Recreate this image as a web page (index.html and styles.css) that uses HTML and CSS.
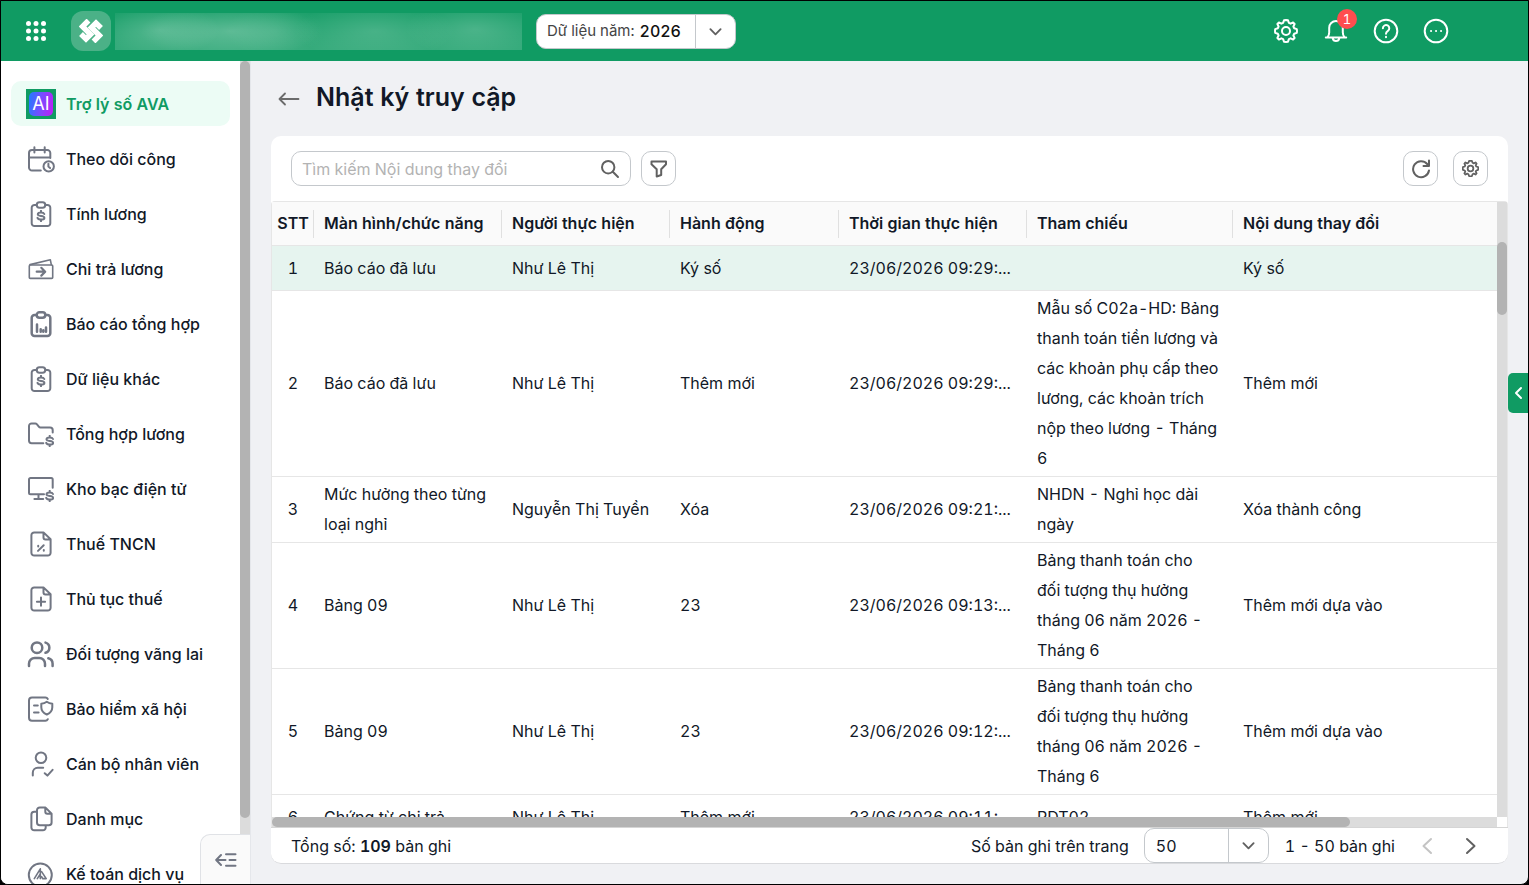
FILE: index.html
```html
<!DOCTYPE html>
<html lang="vi">
<head>
    <meta charset="UTF-8">
    <meta name="viewport" content="width=device-width, initial-scale=1.0">
    <title>Nhật ký truy cập</title>
    <link rel="stylesheet" href="styles.css">
</head>
<body>
    <!-- Icon dùng chung -->
    <svg class="sprite" aria-hidden="true">
        <symbol id="i-dollar" viewBox="0 0 10 12">
            <path d="M5 .8v1.700M5 9.500v1.700M8.300 4C7.900 3 6.700 2.500 5 2.500c-1.900 0-3.200.7-3.200 1.800C1.800 5.500 3.200 5.800 5 6s3.400.7 3.400 1.900-1.400 1.700-3.400 1.700-3.100-.6-3.500-1.700"/>
        </symbol>
        <symbol id="i-clip" viewBox="0 0 30 30">
            <path d="M10.700 6H8.500a2.800 2.800 0 0 0-2.800 2.800v15.400A2.800 2.800 0 0 0 8.500 27h13a2.800 2.800 0 0 0 2.800-2.800V8.800A2.800 2.800 0 0 0 21.500 6h-2.200"/>
            <rect x="10.700" y="3.300" width="8.600" height="5.400" rx="2.700"/>
        </symbol>
        <symbol id="i-file" viewBox="0 0 30 30">
            <path d="M17.500 3.400H8.200a2.800 2.800 0 0 0-2.800 2.800v17.600a2.800 2.800 0 0 0 2.800 2.800h13.600a2.800 2.800 0 0 0 2.800-2.800V10.200zM17.500 3.400v5a2 2 0 0 0 2 2h5"/>
        </symbol>
        <symbol id="i-gear" viewBox="0 0 24 24">
            <path d="M12 1l2 .3.9 2.600 1.700.8 2.500-1.200 1.500 1.500-1.200 2.500.8 1.700 2.600.9.200 1.900-.2 1.900-2.600.9-.8 1.700 1.200 2.500-1.500 1.500-2.500-1.200-1.700.8-.9 2.600-2 .3-2-.3-.9-2.600-1.700-.8-2.500 1.200-1.500-1.500 1.200-2.500-.8-1.700-2.600-.9L1 12l.2-1.900 2.600-.9.800-1.700L3.400 5l1.500-1.500 2.500 1.200 1.700-.8.900-2.600z"/>
            <circle cx="12" cy="12" r="4"/>
        </symbol>
        <symbol id="i-down" viewBox="0 0 14 14">
            <path d="M1.500 4.500L7 10l5.500-5.500"/>
        </symbol>
    </svg>

    <div class="app">
        <header class="topbar">
            <button class="icon-btn apps" aria-label="Ứng dụng">
                <svg width="20" height="20" viewBox="0 0 20 20">
                    <circle cx="2.500" cy="2.500" r="2.500"/><circle cx="10" cy="2.500" r="2.500"/><circle cx="17.500" cy="2.500" r="2.500"/>
                    <circle cx="2.500" cy="10" r="2.500"/><circle cx="10" cy="10" r="2.500"/><circle cx="17.500" cy="10" r="2.500"/>
                    <circle cx="2.500" cy="17.500" r="2.500"/><circle cx="10" cy="17.500" r="2.500"/><circle cx="17.500" cy="17.500" r="2.500"/>
                </svg>
            </button>
            <div class="logo">
                <svg width="24" height="24" viewBox="0 0 24 24">
                    <path d="M9.500 1.500L3.500 7.500 11.500 15.500 7 20 2 15M14.500 22.500L20.500 16.500 12.500 8.500 17 4 22 9"/>
                </svg>
            </div>
            <div class="org-name"></div>
            <div class="select-box year">
                <label for="year">Dữ liệu năm:</label>
                <select id="year"><option>2026</option></select>
                <span class="arrow"><svg width="13" height="13"><use href="#i-down"/></svg></span>
            </div>
            <div class="top-actions">
                <button class="icon-btn" aria-label="Thiết lập"><svg width="26" height="26" viewBox="-1 -1 26 26"><use href="#i-gear" width="24" height="24"/></svg></button>
                <button class="icon-btn bell" aria-label="Thông báo">
                    <svg width="26" height="26" viewBox="0 0 26 26">
                        <path d="M2.800 19.500h20.400M4.500 19.200c1.200-1.400 1.700-2.800 1.700-4.800V9.800a6.800 6.800 0 0 1 13.600 0v4.600c0 2 .5 3.400 1.700 4.800M9.600 20a3.500 4 0 0 0 6.800 0"/>
                    </svg>
                    <span class="badge">1</span>
                </button>
                <button class="icon-btn" aria-label="Trợ giúp">
                    <svg width="26" height="26" viewBox="0 0 26 26"><circle cx="13" cy="13" r="11.300"/><path d="M9.900 10.200a3.200 3.200 0 1 1 5 2.700c-1.300.9-1.900 1.400-1.900 2.800M13 18.700v.6"/></svg>
                </button>
                <button class="icon-btn" aria-label="Thêm">
                    <svg width="26" height="26" viewBox="0 0 26 26"><circle cx="13" cy="13" r="11.300"/><path d="M8 13h.1M13 13h.1M18 13h.1"/></svg>
                </button>
            </div>
        </header>

        <div class="body">
            <aside class="sidebar">
                <nav class="menu">
                    <a class="menu-item active" href="#"><span class="ai"><span>AI</span></span>Trợ lý số AVA</a>
                    <a class="menu-item" href="#"><svg viewBox="0 0 30 30"><path d="M14.800 26.500H6a3 3 0 0 1-3-3V9a3 3 0 0 1 3-3h15.300a3 3 0 0 1 3 3v5M3 13.600h21.300M8.400 3.200v5.200M18.700 3.200v5.200"/><circle cx="22.700" cy="22.400" r="5.200"/><path d="M22.400 19.800v2.800l1.700 1.500"/></svg>Theo dõi công</a>
                    <a class="menu-item" href="#"><svg viewBox="0 0 30 30"><use href="#i-clip"/><use href="#i-dollar" x="10" y="11" width="10" height="12"/></svg>Tính lương</a>
                    <a class="menu-item" href="#"><svg class="thin" viewBox="0 0 30 30"><rect x="3.300" y="11" width="23.400" height="13.400" rx="1"/><path d="M4 10.600L24.300 5.700l1 5"/><path class="mark" d="M10.700 17.700h8.300M15.300 13.800l3.900 3.900-3.900 3.900"/></svg>Chi trả lương</a>
                    <a class="menu-item" href="#"><svg class="bold" viewBox="0 0 30 30"><use href="#i-clip"/><path d="M11 15.600v7.200M14.700 20.200v2.600M17.300 21.200v1.600M20 18.400v4.400"/></svg>Báo cáo tổng hợp</a>
                    <a class="menu-item" href="#"><svg viewBox="0 0 30 30"><use href="#i-clip"/><use href="#i-dollar" x="10" y="11" width="10" height="12"/></svg>Dữ liệu khác</a>
                    <a class="menu-item" href="#"><svg viewBox="0 0 30 30"><path d="M17.300 24.200H5.600A2.600 2.600 0 0 1 3 21.600V7a2.600 2.600 0 0 1 2.600-2.600h3.600a2 2 0 0 1 1.600.8l2 2.500a2 2 0 0 0 1.600.8h9.700a2.600 2.600 0 0 1 2.600 2.600v2.500"/><use href="#i-dollar" x="18.700" y="16" width="10" height="12"/></svg>Tổng hợp lương</a>
                    <a class="menu-item" href="#"><svg viewBox="0 0 30 30"><path d="M18 20.300H4.500A1.500 1.500 0 0 1 3 18.800V5.500A1.500 1.500 0 0 1 4.500 4h20.700a1.500 1.500 0 0 1 1.500 1.500v8.200M12.500 20.300V25M8.400 25h8.800"/><use href="#i-dollar" x="18.700" y="16" width="10" height="12"/></svg>Kho bạc điện tử</a>
                    <a class="menu-item" href="#"><svg viewBox="0 0 30 30"><use href="#i-file"/><path d="M17.700 16.200l-5.700 5.700M12.200 16.700v.8M17.800 20.900v.8"/></svg>Thuế TNCN</a>
                    <a class="menu-item" href="#"><svg viewBox="0 0 30 30"><use href="#i-file"/><path d="M15 13.600v8.200M10.900 17.700h8.200"/></svg>Thủ tục thuế</a>
                    <a class="menu-item" href="#"><svg class="bold" viewBox="0 0 30 30"><circle cx="11" cy="8.700" r="5.300"/><path d="M3 27v-2.300a5.700 5.700 0 0 1 5.700-5.700h4.600a5.700 5.700 0 0 1 5.700 5.700V27M19.500 3.600a5.300 5.300 0 0 1 0 10.200M22.300 19.200a5.700 5.700 0 0 1 4.300 5.500V27"/></svg>Đối tượng vãng lai</a>
                    <a class="menu-item" href="#"><svg viewBox="0 0 30 30"><path d="M21.800 5A3 3 0 0 0 19.400 3.500H6a3 3 0 0 0-3 3v17.200a3 3 0 0 0 3 3h13.400a3 3 0 0 0 2.400-1.500M8 11.600h3.800M8 18.600h4.600M20.800 7.800c1.700 1.200 3.400 1.800 5.500 2v3.400c0 3.500-2 5.700-5.500 7.300-3.500-1.600-5.500-3.800-5.500-7.300V9.800c2.100-.2 3.800-.8 5.500-2z"/></svg>Bảo hiểm xã hội</a>
                    <a class="menu-item" href="#"><svg viewBox="0 0 30 30"><circle cx="15" cy="8.700" r="5.300"/><path d="M6.800 26.400v-2.700a5 5 0 0 1 5-5h5.400M18.700 24.200l2.700 2.400 5.200-5.800"/></svg>Cán bộ nhân viên</a>
                    <a class="menu-item" href="#"><svg viewBox="0 0 30 30"><path d="M19.300 3.400h-5.500A2.800 2.800 0 0 0 11 6.200v12.300a2.800 2.800 0 0 0 2.800 2.800h9a2.800 2.800 0 0 0 2.800-2.800V9.700zM19.300 3.400v4.400a2 2 0 0 0 2 2h4.300M10.500 7.700H8.200a2.800 2.800 0 0 0-2.800 2.800v13a2.800 2.800 0 0 0 2.800 2.800h8.700a2.800 2.800 0 0 0 2.800-2.800v-1.700"/></svg>Danh mục</a>
                    <a class="menu-item" href="#"><svg viewBox="0 0 30 30"><circle cx="14.300" cy="16" r="11.500"/><path class="mark-thin" d="M8.300 19.600l6-9.800v9.800M11.300 19.600l3-4.600M15.600 12.600l4.600 7h-3.600l-1-2"/></svg>Kế toán dịch vụ</a>
                </nav>
                <div class="track track-y"><div class="thumb side-thumb"></div></div>
                <button class="collapse" aria-label="Thu gọn">
                    <svg width="22" height="16" viewBox="0 0 22 16"><path d="M1.500 8h9M6 3L1.200 8 6 13M11 2.200h9.500M14.500 8h6M11 13.800h9.500"/></svg>
                </button>
            </aside>

            <main class="content">
                <div class="title-row">
                    <button class="icon-btn back" aria-label="Quay lại">
                        <svg width="22" height="16" viewBox="0 0 22 16"><path d="M20.500 8h-19M7 2.500L1.500 8 7 13.500"/></svg>
                    </button>
                    <h1>Nhật ký truy cập</h1>
                </div>

                <section class="card">
                    <div class="toolbar">
                        <div class="search">
                            <input type="text" aria-label="Tìm kiếm" placeholder="Tìm kiếm Nội dung thay đổi">
                            <svg width="20" height="20" viewBox="0 0 20 20"><circle cx="8.200" cy="8.200" r="6.200"/><path d="M12.800 12.800L18 18"/></svg>
                        </div>
                        <button class="tool-btn" aria-label="Lọc">
                            <svg width="20" height="20" viewBox="0 0 20 20"><path d="M2.500 2.500h14.500v2.700l-4.800 5v5.800l-4.500 1.500V10.200L2.500 5.200z"/></svg>
                        </button>
                        <button class="tool-btn refresh" aria-label="Tải lại">
                            <svg width="20" height="20" viewBox="0 0 20 20"><path d="M18 11.500A8 8 0 1 1 16.200 5l1.500 1.700M18 1.500v5.500h-5.500"/></svg>
                        </button>
                        <button class="tool-btn" aria-label="Tùy chỉnh cột">
                            <svg class="bold" width="17" height="17" viewBox="0 0 24 24"><use href="#i-gear"/></svg>
                        </button>
                    </div>

                    <div class="grid">
                        <div class="viewport">
                            <table>
                                <colgroup>
                                    <col class="c-no"><col class="c-screen"><col class="c-user"><col class="c-action">
                                    <col class="c-time"><col class="c-ref"><col>
                                </colgroup>
                                <thead>
                                    <tr>
                                        <th>STT</th>
                                        <th>Màn hình/chức năng</th>
                                        <th>Người thực hiện</th>
                                        <th>Hành động</th>
                                        <th>Thời gian thực hiện</th>
                                        <th>Tham chiếu</th>
                                        <th>Nội dung thay đổi</th>
                                    </tr>
                                </thead>
                                <tbody>
                                    <tr class="selected">
                                        <td>1</td><td>Báo cáo đã lưu</td><td>Như Lê Thị</td><td>Ký số</td>
                                        <td>23/06/2026 09:29:...</td><td></td><td>Ký số</td>
                                    </tr>
                                    <tr>
                                        <td>2</td><td>Báo cáo đã lưu</td><td>Như Lê Thị</td><td>Thêm mới</td>
                                        <td>23/06/2026 09:29:...</td>
                                        <td>Mẫu số C02a-HD: Bảng thanh toán tiền lương và các khoản phụ cấp theo lương, các khoản trích nộp theo lương - Tháng 6</td>
                                        <td>Thêm mới</td>
                                    </tr>
                                    <tr>
                                        <td>3</td><td>Mức hưởng theo từng loại nghỉ</td><td>Nguyễn Thị Tuyền</td><td>Xóa</td>
                                        <td>23/06/2026 09:21:...</td><td>NHDN - Nghỉ học dài ngày</td><td>Xóa thành công</td>
                                    </tr>
                                    <tr>
                                        <td>4</td><td>Bảng 09</td><td>Như Lê Thị</td><td>23</td>
                                        <td>23/06/2026 09:13:...</td>
                                        <td>Bảng thanh toán cho<br>đối tượng thụ hưởng tháng 06 năm 2026 - Tháng 6</td>
                                        <td>Thêm mới dựa vào</td>
                                    </tr>
                                    <tr>
                                        <td>5</td><td>Bảng 09</td><td>Như Lê Thị</td><td>23</td>
                                        <td>23/06/2026 09:12:...</td>
                                        <td>Bảng thanh toán cho<br>đối tượng thụ hưởng tháng 06 năm 2026 - Tháng 6</td>
                                        <td>Thêm mới dựa vào</td>
                                    </tr>
                                    <tr>
                                        <td>6</td><td>Chứng từ chi trả</td><td>Như Lê Thị</td><td>Thêm mới</td>
                                        <td>23/06/2026 09:11:...</td><td>PDT02</td><td>Thêm mới</td>
                                    </tr>
                                </tbody>
                            </table>
                        </div>
                        <div class="track track-y"><div class="thumb grid-thumb-y"></div></div>
                        <div class="track track-x"><div class="thumb grid-thumb-x"></div></div>
                    </div>

                    <footer class="pager">
                        <span>Tổng số: <b>109</b> bản ghi</span>
                        <label class="per-page" for="size">Số bản ghi trên trang</label>
                        <div class="select-box size">
                            <select id="size"><option>50</option></select>
                            <span class="arrow"><svg width="13" height="13"><use href="#i-down"/></svg></span>
                        </div>
                        <span>1 - 50 bản ghi</span>
                        <button class="icon-btn page-btn" aria-label="Trang trước" disabled>
                            <svg width="12" height="18" viewBox="0 0 12 18"><path d="M10 2L2.500 9l7.500 7"/></svg>
                        </button>
                        <button class="icon-btn page-btn" aria-label="Trang sau">
                            <svg width="12" height="18" viewBox="0 0 12 18"><path d="M2 2l7.500 7L2 16"/></svg>
                        </button>
                    </footer>
                </section>
            </main>
        </div>

        <button class="drawer" aria-label="Mở rộng">
            <svg width="10" height="14" viewBox="0 0 10 14"><path d="M8 2L3 7l5 5"/></svg>
        </button>
    </div>
</body>
</html>
```
FILE: styles.css
```css
* {
    box-sizing: border-box;
}
html {
    background: #000;
}
body {
    margin: 0;
    font-family: Inter, "Liberation Sans", sans-serif;
    font-size: 16px;
    font-variant-numeric: tabular-nums;
    line-height: 30px;
    color: #111827;
}
button, input, select {
    font: inherit;
    color: inherit;
}
button {
    padding: 0;
    cursor: pointer;
}
svg {
    display: block;
    flex: none;
    fill: none;
    stroke: currentColor;
    stroke-width: 2;
    stroke-linecap: round;
    stroke-linejoin: round;
}
.sprite {
    display: none;
}
.app {
    position: relative;
    display: flex;
    flex-direction: column;
    height: 100vh;
    border: 1px solid #000;
    border-radius: 0 0 8px 8px;
    overflow: hidden;
    background: #f0f1f4;
}
.icon-btn {
    display: flex;
    align-items: center;
    justify-content: center;
    background: none;
    border: none;
}

/* thanh trên cùng */
.topbar {
    display: flex;
    align-items: center;
    flex: none;
    height: 60px;
    padding: 0 79px 0 25px;
    background: #109b63;
    color: #fff;
}
.apps svg {
    fill: #fff;
    stroke: none;
}
.logo {
    display: flex;
    align-items: center;
    justify-content: center;
    width: 40px;
    height: 40px;
    margin-left: 25px;
    border-radius: 12px;
    background: #4bb187;
}
.logo svg {
    stroke-width: 5.4;
    stroke-linecap: butt;
    stroke-linejoin: miter;
}
.org-name {
    width: 407px;
    height: 37px;
    margin-left: 4px;
    background:
        radial-gradient(ellipse 60px 26px at 45px 17px, rgba(255, 255, 255, 0.2), transparent),
        radial-gradient(ellipse 90px 28px at 115px 18px, rgba(255, 255, 255, 0.24), transparent),
        radial-gradient(ellipse 50px 26px at 160px 18px, rgba(255, 255, 255, 0.08), transparent),
        radial-gradient(ellipse 80px 30px at 260px 18px, rgba(255, 255, 255, 0.14), transparent),
        radial-gradient(ellipse 70px 28px at 360px 16px, rgba(255, 255, 255, 0.16), transparent),
        linear-gradient(rgba(255, 255, 255, 0.05), rgba(255, 255, 255, 0.16));
}
.select-box {
    display: flex;
    align-items: center;
    height: 35px;
    border: 1px solid #c4c8cc;
    border-radius: 10px;
    background: #fff;
}
.select-box select {
    flex: 1;
    min-width: 0;
    height: 100%;
    padding: 0;
    border: none;
    outline: none;
    background: none;
    appearance: none;
}
.select-box .arrow {
    display: flex;
    align-items: center;
    justify-content: center;
    width: 40px;
    height: 100%;
    border-left: 1px solid #c4c8cc;
    color: #616161;
}
.year {
    width: 200px;
    margin-left: 14px;
    padding-left: 10px;
    color: #111;
}
.year label {
    margin-right: 5px;
    font-size: 15px;
    color: #444;
}
.year select {
    font-weight: 500;
}
.top-actions {
    display: flex;
    gap: 24px;
    margin-left: auto;
}
.bell {
    position: relative;
}
.badge {
    position: absolute;
    top: -9px;
    right: -8px;
    width: 20px;
    height: 20px;
    border-radius: 50%;
    background: #ff4d4f;
    font-size: 13px;
    line-height: 20px;
}

/* menu trái */
.body {
    display: flex;
    flex: 1;
    min-height: 0;
}
.sidebar {
    position: relative;
    display: flex;
    flex: none;
    width: 250px;
    border-right: 1px solid #e5e7eb;
    background: #fff;
}
.menu {
    display: flex;
    flex-direction: column;
    flex: 1;
    gap: 10px;
    padding: 20px 10px 0;
    overflow: hidden;
}
.menu-item {
    display: flex;
    align-items: center;
    flex: none;
    gap: 10px;
    padding: 8px 15px 7px;
    border-radius: 10px;
    color: #111827;
    font-weight: 500;
    text-decoration: none;
    white-space: nowrap;
}
.menu-item svg {
    width: 30px;
    height: 30px;
    color: #717683;
}
.bold {
    stroke-width: 2.5;
}
.thin, .mark-thin {
    stroke-width: 1.6;
}
.mark {
    stroke-width: 2.2;
}
.menu-item.active {
    background: #ecfcf5;
    color: #109b63;
    font-weight: 600;
}
.ai {
    padding: 3px;
    background: #109b63;
}
.ai span {
    display: block;
    width: 24px;
    height: 24px;
    border-radius: 5px;
    background: linear-gradient(100deg, #1f7dff, #7a4bff 50%, #c01cf5);
    color: #fff;
    font-size: 18px;
    font-weight: 400;
    line-height: 24px;
    text-align: center;
}
.track {
    display: flex;
    background: #dcdcdc;
}
.track-y {
    flex-direction: column;
    width: 10px;
}
.thumb {
    border-radius: 5px;
    background: #b3b3b3;
}
.side-thumb {
    height: 92%;
}
.collapse {
    position: absolute;
    right: 0;
    bottom: 0;
    display: flex;
    align-items: center;
    justify-content: center;
    width: 50px;
    height: 50px;
    border: 1px solid #e0e2e6;
    border-width: 1px 0 0 1px;
    border-radius: 10px 0 0 0;
    background: #fafafa;
    color: #717683;
}

/* nội dung */
.content {
    display: flex;
    flex-direction: column;
    flex: 1;
    min-width: 0;
    padding: 0 20px 20px;
}
.title-row {
    display: flex;
    align-items: center;
    gap: 16px;
    flex: none;
    height: 75px;
    padding-left: 7px;
}
.title-row h1 {
    margin: 0;
    padding-bottom: 3px;
    font-size: 25px;
    font-weight: 600;
}
.back {
    color: #6b6b6b;
}
.back svg {
    stroke-width: 1.8;
}
.card {
    display: flex;
    flex-direction: column;
    flex: 1;
    min-height: 0;
    border-radius: 10px;
    background: #fff;
}
.toolbar {
    display: flex;
    gap: 10px;
    padding: 15px 20px;
}
.search {
    display: flex;
    align-items: center;
    width: 340px;
    height: 35px;
    padding: 0 10px;
    border: 1px solid #c4c8cc;
    border-radius: 10px;
    color: #616161;
}
.search input {
    flex: 1;
    min-width: 0;
    padding: 0;
    border: none;
    outline: none;
    background: none;
}
.search input::placeholder {
    color: #b3b3b3;
    opacity: 1;
}
.tool-btn {
    display: flex;
    align-items: center;
    justify-content: center;
    width: 35px;
    height: 35px;
    border: 1px solid #c4c8cc;
    border-radius: 10px;
    background: #fff;
    color: #616161;
}
.refresh {
    margin-left: auto;
    margin-right: 5px;
}

/* bảng */
.grid {
    display: grid;
    grid-template-columns: minmax(0, 1fr) 10px;
    grid-template-rows: minmax(0, 1fr) 10px;
    flex: 1;
    min-height: 0;
    border: 1px solid #e6e6e6;
    border-bottom: none;
    border-radius: 4px 4px 0 0;
}
.viewport {
    overflow: hidden;
}
.grid-thumb-y {
    height: 73px;
    margin-top: 40px;
}
.grid-thumb-x {
    width: 88%;
}
table {
    width: 100%;
    min-width: 1400px;
    border-spacing: 0;
    table-layout: fixed;
}
.c-no {
    width: 42px;
}
.c-screen, .c-time {
    width: 188px;
}
.c-user {
    width: 168px;
}
.c-action {
    width: 169px;
}
.c-ref {
    width: 206px;
}
th {
    height: 44px;
    padding: 0 10px 2px;
    border-bottom: 1px solid #e6e6e6;
    background: linear-gradient(#e0e0e0, #e0e0e0) right center / 1px 28px no-repeat #fafafa;
    font-weight: 600;
    text-align: left;
    white-space: nowrap;
}
td {
    height: 45px;
    padding: 2px 10px 3px;
    border-bottom: 1px solid #e6e6e6;
}
th:first-child, td:first-child {
    padding-left: 0;
    padding-right: 0;
    text-align: center;
}
.selected td {
    background: #e6f4ef;
}
.pager {
    display: flex;
    align-items: center;
    flex: none;
    height: 37px;
    padding: 0 25px 0 20px;
    border-top: 1px solid #d5d5d5;
    border-bottom: 1px solid #d9dadd;
    border-radius: 0 0 10px 10px;
}
.pager b {
    font-weight: 600;
}
.per-page {
    margin-left: auto;
}
.size {
    width: 125px;
    margin: 0 16px 0 15px;
    padding-left: 11px;
}
.page-btn {
    width: 24px;
    margin-left: 20px;
    color: #616161;
}
.page-btn:disabled {
    color: #c4c4c4;
}
.drawer {
    position: absolute;
    top: 372px;
    right: 0;
    display: flex;
    align-items: center;
    justify-content: center;
    width: 20px;
    height: 40px;
    border: none;
    border-radius: 5px 0 0 5px;
    background: #109b63;
    color: #fff;
}
```
